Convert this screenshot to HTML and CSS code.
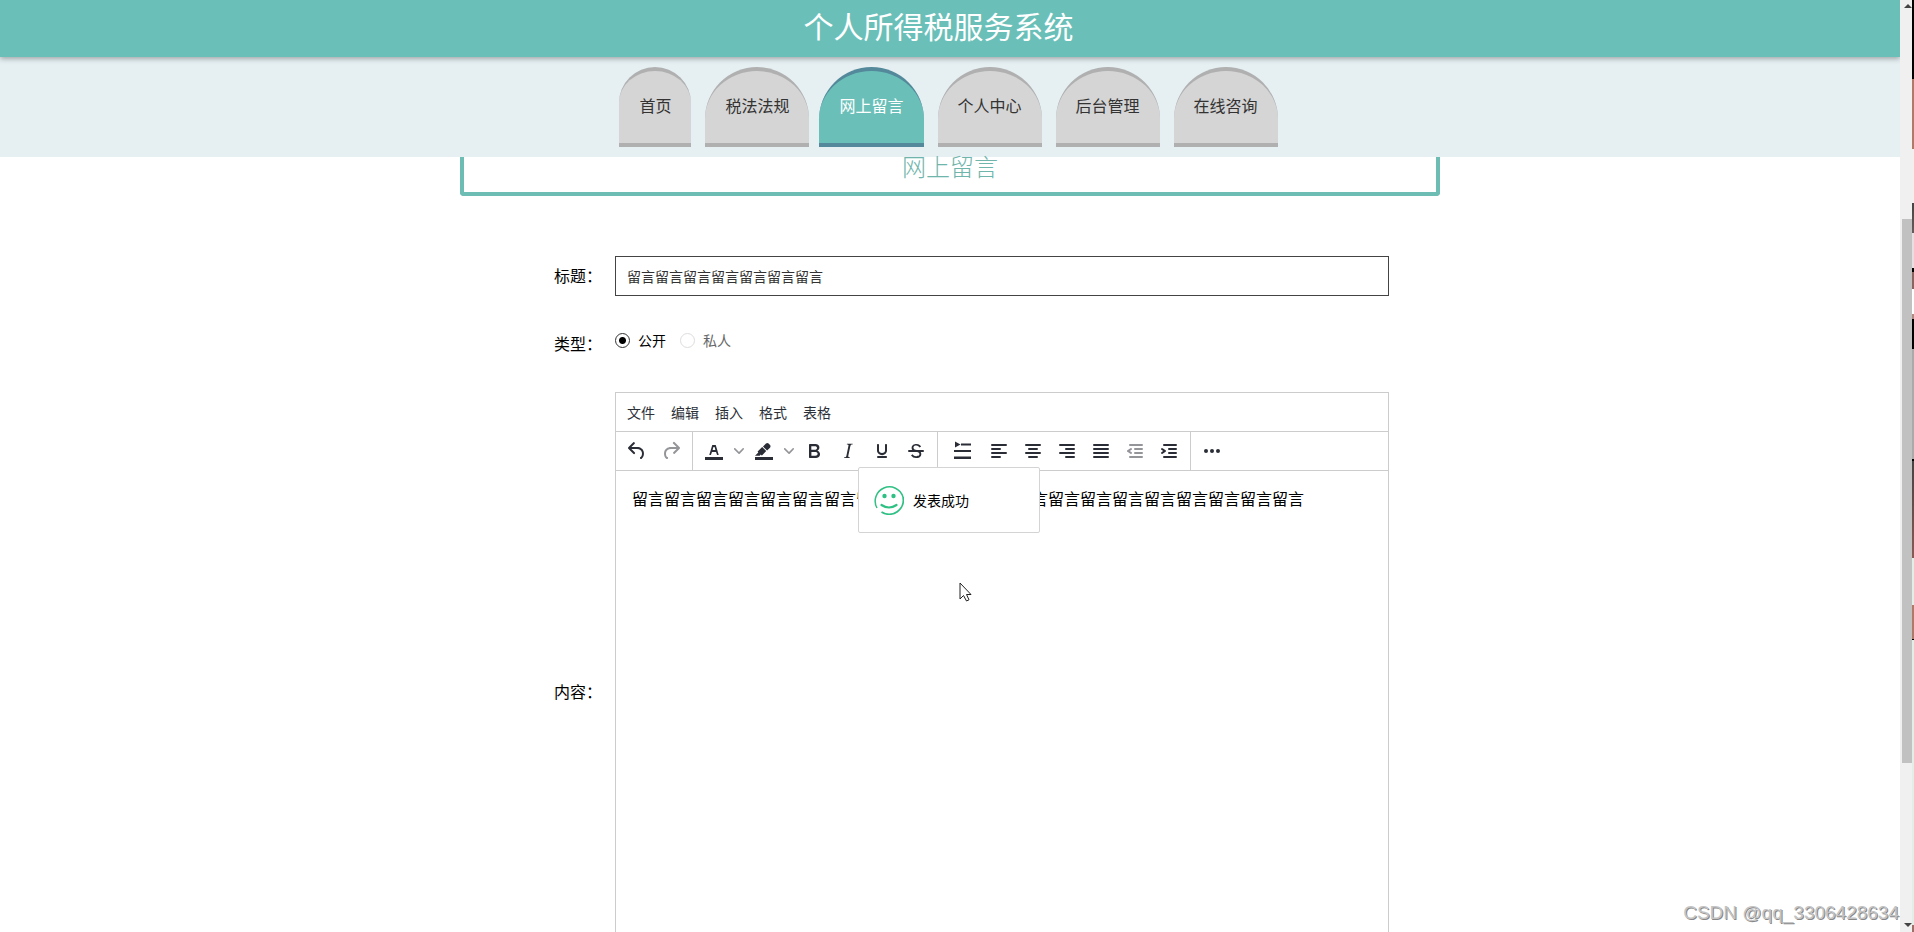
FILE: index.html
```html
<!DOCTYPE html>
<html lang="zh-CN">
<head>
<meta charset="utf-8">
<title>个人所得税服务系统</title>
<link rel="stylesheet" href="styles.css">
</head>
<body>
<div class="page">
  <header class="header"><h1 class="brand">个人所得税服务系统</h1></header>
  <nav class="nav">
    <a class="tab tab-home" href="#">首页</a>
    <a class="tab tab-law" href="#">税法法规</a>
    <a class="tab active" href="#">网上留言</a>
    <a class="tab" href="#">个人中心</a>
    <a class="tab" href="#">后台管理</a>
    <a class="tab" href="#">在线咨询</a>
  </nav>
  <main class="main">
    <h2 class="banner">网上留言</h2>
    <form class="form">
      <label class="label" for="title">标题：</label>
      <input class="input" id="title" type="text" value="留言留言留言留言留言留言留言">
      <span class="label label-type" id="type-label">类型：</span>
      <div class="radios" role="radiogroup" aria-labelledby="type-label">
        <label class="radio"><input type="radio" name="type" checked>公开</label>
        <label class="radio muted"><input type="radio" name="type">私人</label>
      </div>
      <label class="label" for="content">内容：</label>
      <div class="editor">
        <div class="menubar">
          <button type="button" class="menu">文件</button>
          <button type="button" class="menu">编辑</button>
          <button type="button" class="menu">插入</button>
          <button type="button" class="menu">格式</button>
          <button type="button" class="menu">表格</button>
        </div>
        <div class="toolbar">
          <div class="group">
            <button type="button" class="tool" aria-label="撤销"><svg viewBox="0 0 24 24"><path d="M6.4 8H12c3.7 0 6.2 2 6.8 5.1.6 2.7-.4 5.6-2.3 6.8a1 1 0 0 1-1-1.8c1.1-.6 1.8-2.7 1.4-4.6-.5-2.1-2.1-3.5-4.9-3.5H6.4l3.3 3.3a1 1 0 1 1-1.4 1.4l-5-5a1 1 0 0 1 0-1.4l5-5a1 1 0 0 1 1.4 1.4L6.4 8z"/></svg></button>
            <button type="button" class="tool off" aria-label="重做"><svg viewBox="0 0 24 24"><path d="M17.6 10H12c-2.8 0-4.4 1.4-4.9 3.5-.4 2 .3 4 1.4 4.6a1 1 0 1 1-1 1.8c-2-1.2-2.9-4.1-2.3-6.8.6-3 3-5.1 6.8-5.1h5.6l-3.3-3.3a1 1 0 1 1 1.4-1.4l5 5a1 1 0 0 1 0 1.4l-5 5a1 1 0 0 1-1.4-1.4l3.3-3.3z"/></svg></button>
          </div>
          <div class="group">
            <button type="button" class="tool" aria-label="文字颜色"><svg viewBox="0 0 24 24"><path d="M3 18h18v3H3z"/><path d="M8.7 16h-.8a.5.5 0 0 1-.5-.6l2.7-9c.1-.3.3-.4.5-.4h2.8c.2 0 .4.1.5.4l2.7 9a.5.5 0 0 1-.5.6h-.8a.5.5 0 0 1-.4-.4l-.7-2.2c0-.3-.3-.4-.5-.4h-3.4c-.2 0-.4.1-.5.4l-.7 2.2c0 .3-.2.4-.4.4zm2.6-7.6l-.6 2a.5.5 0 0 0 .5.6h1.6a.5.5 0 0 0 .5-.6l-.6-2c0-.3-.3-.4-.5-.4h-.4c-.2 0-.4.1-.5.4z"/></svg></button>
            <button type="button" class="tool chevron" aria-label="选择文字颜色"><svg viewBox="0 0 10 10"><path d="M8.7 2.2c.3-.3.8-.3 1 0 .4.4.4.9 0 1.2L5.7 7.8c-.3.3-.9.3-1.2 0L.2 3.4a.8.8 0 0 1 0-1.2c.3-.3.8-.3 1.1 0L5 6l3.7-3.8z"/></svg></button>
            <button type="button" class="tool" aria-label="背景颜色"><svg viewBox="0 0 24 24"><path d="M3 18h18v3H3z"/><path d="M7.7 16.7H3l3.3-3.3-.7-.8L10.2 8l4 4.1-4 4.2c-.2.2-.6.2-.8 0l-.6-.7-1.1 1.1zm5-7.5L11 7.4l3-2.9a2 2 0 0 1 2.6 0L18 6c.7.7.7 2 0 2.7l-2.9 2.9-1.8-1.8-.6-.6z"/></svg></button>
            <button type="button" class="tool chevron" aria-label="选择背景颜色"><svg viewBox="0 0 10 10"><path d="M8.7 2.2c.3-.3.8-.3 1 0 .4.4.4.9 0 1.2L5.7 7.8c-.3.3-.9.3-1.2 0L.2 3.4a.8.8 0 0 1 0-1.2c.3-.3.8-.3 1.1 0L5 6l3.7-3.8z"/></svg></button>
            <button type="button" class="tool" aria-label="粗体"><svg viewBox="0 0 24 24"><path d="M7.8 19c-.3 0-.5 0-.6-.2l-.2-.5V5.7c0-.2 0-.4.2-.5l.6-.2h5c1.5 0 2.7.3 3.5 1 .7.6 1.1 1.4 1.1 2.5a3 3 0 0 1-.6 1.9c-.4.6-1 1-1.6 1.2.4.1.9.3 1.3.6s.8.7 1 1.2c.4.4.5 1 .5 1.6 0 1.3-.4 2.3-1.3 3-.8.7-2.1 1-3.8 1H7.8zm5-8.3c.6 0 1.2-.1 1.6-.5.4-.3.6-.7.6-1.3 0-1.1-.8-1.7-2.3-1.7H9.3v3.5h3.4zm.5 6c.7 0 1.3-.1 1.7-.4.4-.4.6-.9.6-1.5s-.2-1-.7-1.4c-.4-.3-1-.4-2-.4H9.4v3.8h4z"/></svg></button>
            <button type="button" class="tool" aria-label="斜体"><svg viewBox="0 0 24 24"><path d="M16.7 4.7l-.1.9h-.3c-.6 0-1 0-1.4.3-.3.3-.4.6-.5 1.1l-2.1 9.8v.6c0 .5.4.8 1.4.8h.2l-.2.8H8l.2-.8h.2c1.1 0 1.8-.5 2-1.5l2-9.8.1-.5c0-.6-.4-.8-1.4-.8h-.3l.2-.9h5.8z"/></svg></button>
            <button type="button" class="tool" aria-label="下划线"><svg viewBox="0 0 24 24"><path d="M16 5c.6 0 1 .4 1 1v5.5a4 4 0 0 1-.4 1.8l-1 1.4a5.3 5.3 0 0 1-5.5 1 5 5 0 0 1-1.6-1c-.5-.4-.8-.9-1.1-1.4a4 4 0 0 1-.4-1.8V6c0-.6.4-1 1-1s1 .4 1 1v5.5c0 .3 0 .6.2 1l.6.7a3.3 3.3 0 0 0 2.2.8 3.4 3.4 0 0 0 2.2-.8c.3-.2.4-.5.6-.8l.2-.9V6c0-.6.4-1 1-1zM8 17h8c.6 0 1 .4 1 1s-.4 1-1 1H8a1 1 0 0 1 0-2z"/></svg></button>
            <button type="button" class="tool" aria-label="删除线"><svg viewBox="0 0 24 24"><path d="M15.6 8.5c-.5-.7-1-1.1-1.3-1.3-.6-.4-1.3-.6-2-.6-2.7 0-2.8 1.7-2.8 2.1 0 1.6 1.8 2 3.2 2.3 4.4.9 4.6 2.8 4.6 3.9 0 1.4-.7 4.1-5 4.1A6.2 6.2 0 0 1 7 16.4l1.500-1.100c.4.6 1.600 2 3.700 2 1.600 0 2.500-.4 3-1.200.4-.8.3-2-.8-2.600-.7-.4-1.600-.7-2.900-1-1-.2-3.900-.8-3.900-3.600C7.600 6 10.300 5 12.400 5c2.900 0 4.200 1.600 4.700 2.400l-1.500 1.100z"/><path d="M5 11h14a1 1 0 0 1 0 2H5a1 1 0 0 1 0-2z"/></svg></button>
          </div>
          <div class="group">
            <button type="button" class="tool wide" aria-label="首行缩进"><svg viewBox="0 0 24 24"><path d="M5 2.500l5.500 3L5 8.500zM11 4.500h10v2H11zM4 11h17v2H4zM4 17.500h17v2.500H4z"/></svg></button>
            <button type="button" class="tool" aria-label="左对齐"><svg viewBox="0 0 24 24"><path d="M5 5h14a1 1 0 0 1 0 2H5a1 1 0 1 1 0-2zm0 4h8a1 1 0 0 1 0 2H5a1 1 0 1 1 0-2zm0 8h8a1 1 0 0 1 0 2H5a1 1 0 0 1 0-2zm0-4h14a1 1 0 0 1 0 2H5a1 1 0 0 1 0-2z"/></svg></button>
            <button type="button" class="tool" aria-label="居中"><svg viewBox="0 0 24 24"><path d="M5 5h14a1 1 0 0 1 0 2H5a1 1 0 1 1 0-2zm3 4h8a1 1 0 0 1 0 2H8a1 1 0 1 1 0-2zm0 8h8a1 1 0 0 1 0 2H8a1 1 0 0 1 0-2zm-3-4h14a1 1 0 0 1 0 2H5a1 1 0 0 1 0-2z"/></svg></button>
            <button type="button" class="tool" aria-label="右对齐"><svg viewBox="0 0 24 24"><path d="M5 5h14a1 1 0 0 1 0 2H5a1 1 0 1 1 0-2zm6 4h8a1 1 0 0 1 0 2h-8a1 1 0 0 1 0-2zm0 8h8a1 1 0 0 1 0 2h-8a1 1 0 0 1 0-2zm-6-4h14a1 1 0 0 1 0 2H5a1 1 0 0 1 0-2z"/></svg></button>
            <button type="button" class="tool" aria-label="两端对齐"><svg viewBox="0 0 24 24"><path d="M5 5h14a1 1 0 0 1 0 2H5a1 1 0 1 1 0-2zm0 4h14a1 1 0 0 1 0 2H5a1 1 0 1 1 0-2zm0 4h14a1 1 0 0 1 0 2H5a1 1 0 0 1 0-2zm0 4h14a1 1 0 0 1 0 2H5a1 1 0 0 1 0-2z"/></svg></button>
            <button type="button" class="tool off" aria-label="减少缩进"><svg viewBox="0 0 24 24"><path d="M7 5h12a1 1 0 0 1 0 2H7a1 1 0 1 1 0-2zm5 4h7a1 1 0 0 1 0 2h-7a1 1 0 0 1 0-2zm0 4h7a1 1 0 0 1 0 2h-7a1 1 0 0 1 0-2zm-5 4h12a1 1 0 0 1 0 2H7a1 1 0 0 1 0-2zm1.600-3.800a1 1 0 0 1-1.200 1.600l-3-2a1 1 0 0 1 0-1.600l3-2a1 1 0 0 1 1.200 1.600L6.800 12l1.800 1.200z"/></svg></button>
            <button type="button" class="tool" aria-label="增加缩进"><svg viewBox="0 0 24 24"><path d="M7 5h12a1 1 0 0 1 0 2H7a1 1 0 1 1 0-2zm5 4h7a1 1 0 0 1 0 2h-7a1 1 0 0 1 0-2zm0 4h7a1 1 0 0 1 0 2h-7a1 1 0 0 1 0-2zm-5 4h12a1 1 0 0 1 0 2H7a1 1 0 0 1 0-2zm-2.600-3.800L6.200 12l-1.800-1.200a1 1 0 0 1 1.200-1.600l3 2a1 1 0 0 1 0 1.600l-3 2a1 1 0 1 1-1.200-1.600z"/></svg></button>
          </div>
          <div class="group">
            <button type="button" class="tool" aria-label="更多"><svg viewBox="0 0 24 24"><circle cx="6" cy="12" r="2"/><circle cx="12" cy="12" r="2"/><circle cx="18" cy="12" r="2"/></svg></button>
          </div>
        </div>
        <textarea class="content" id="content">留言留言留言留言留言留言留言留言留言留言留言留言留言留言留言留言留言留言留言留言留言</textarea>
      </div>
    </form>
  </main>
  <div class="toast" role="status">
    <svg class="smile" viewBox="0 0 30 30"><path d="M3 23A14.200 14.200 0 1 1 29 12" fill="none" stroke="#2fc083" stroke-width="1.500"/><path d="M7.500 27A14.200 14.200 0 0 0 29 12" fill="none" stroke="#2fc083" stroke-width="1.800"/><circle cx="10.500" cy="11" r="2.200"/><circle cx="19.500" cy="11" r="2.200"/><path d="M7.500 20q7.500 5 15 0" fill="none" stroke="#2fc083" stroke-width="2.200" stroke-linecap="round"/></svg>
    <span>发表成功</span>
  </div>
  <svg class="cursor" viewBox="0 0 14 20"><path d="M1 1v16l3.500-3.500 3 5.500 2.500-1.200-2.500-5.300H12z" fill="#fff" stroke="#222"/></svg>
  <div class="watermark">CSDN @qq_3306428634</div>
</div>
<div class="scrollbar"><span class="arrow up"></span><span class="thumb"></span><span class="arrow down"></span></div>
<div class="edge"></div>
</body>
</html>
```

FILE: styles.css
```css
* { box-sizing: border-box; }
body {
  margin: 0;
  height: 100vh;
  display: flex;
  overflow: hidden;
  background: #fff;
  color: #000;
  font: 16px/24px "Noto Sans CJK SC", sans-serif;
}
button, input, textarea { font: inherit; color: inherit; }
.page { position: relative; flex: 1; overflow: hidden; }
.header {
  position: relative;
  height: 57px;
  padding-right: 23px;
  background: #6ac0b9;
  box-shadow: 0 2px 5px rgba(0, 0, 0, .3);
}
.brand {
  margin: 0;
  color: #fff;
  font-size: 30px;
  font-weight: 400;
  line-height: 50px;
  text-align: center;
}
.nav {
  display: flex;
  justify-content: center;
  gap: 14px;
  height: 100px;
  padding: 10px 3px 10px 0;
  background: #e6f0f3;
}
.tab {
  height: 80px;
  padding: 0 20px;
  border: solid #b0b0b0;
  border-width: 4px 0;
  border-radius: 60px 60px 0 0;
  background: #d5d5d5;
  color: #333;
  line-height: 68px;
  text-decoration: none;
}
.tab-law { margin-right: -4px; }
.tab.active { background: #6ac0b9; border-color: #53899a; color: #fff; }
.main { width: 980px; max-width: 100%; margin: 0 auto; }
.banner {
  margin: 0 0 60px;
  height: 39px;
  border: 4px solid #6ebdb4;
  border-top: 0;
  border-radius: 0 0 4px 4px;
  color: #6fb5ac;
  font-size: 24px;
  font-weight: 300;
  line-height: 18px;
  text-align: center;
}
.form {
  display: grid;
  grid-template-columns: 61px 1fr;
  align-items: center;
  padding: 0 51px 0 94px;
}
.label { padding-bottom: 2px; line-height: 24px; white-space: nowrap; }
.input {
  width: 100%;
  height: 40px;
  padding: 0 11px;
  border: 1px solid #444;
  background: #fff;
  color: #333;
  font-size: 14px;
}
.radios {
  display: flex;
  gap: 14px;
  align-items: center;
  height: 96px;
  padding-bottom: 8px;
  font-size: 14px;
}
.radio { display: flex; align-items: center; gap: 8px; }
.radio input {
  appearance: none;
  width: 15px;
  height: 15px;
  margin: 0;
  border: 1px solid #ddd;
  border-radius: 50%;
}
.radio input:checked {
  border-color: #333;
  background: radial-gradient(circle, #000 3px, #fff 4px);
}
.muted { color: #666; }
.editor {
  display: flex;
  flex-direction: column;
  height: 600px;
  border: 1px solid #ccc;
}
.menubar {
  display: flex;
  gap: 16px;
  height: 39px;
  padding: 0 11px;
  border-bottom: 1px solid #ccc;
}
.menu, .tool { padding: 0; border: 0; background: none; color: #2b2f38; }
.menu { font-size: 14px; }
.toolbar { display: flex; height: 39px; border-bottom: 1px solid #ccc; }
.group { display: flex; padding: 0 4px; border-right: 1px solid #ccc; }
.group:last-child { border: 0; }
.tool { display: flex; align-items: center; justify-content: center; width: 34px; }
.tool svg { width: 24px; height: 24px; fill: #2b2d36; }
.tool.wide { width: 40px; }
.tool.off svg { opacity: .5; }
.tool.chevron { width: 16px; }
.tool.chevron svg { width: 10px; height: 10px; opacity: .5; }
.content {
  flex: 1;
  padding: 15px 16px;
  border: 0;
  outline: 0;
  resize: none;
  background: none;
}
.toast {
  position: absolute;
  top: 467px;
  left: 50%;
  display: flex;
  align-items: center;
  gap: 9px;
  width: 182px;
  height: 66px;
  margin-left: -92px;
  padding: 0 15px;
  border: 1px solid #d3d4d3;
  border-radius: 2px;
  background: #fff;
  font-size: 14px;
}
.smile { width: 30px; height: 30px; fill: #2fc083; }
.cursor { position: absolute; top: 582px; left: 959px; width: 14px; height: 20px; }
.watermark {
  position: absolute;
  right: 1px;
  bottom: 7px;
  color: #c4c4c4;
  font: 19px/24px "Liberation Sans", sans-serif;
  text-shadow: 1px 1px 0 #888;
}
.scrollbar {
  display: flex;
  flex-direction: column;
  align-items: flex-end;
  width: 12px;
  background: #f0f0f0;
}
.arrow { width: 8px; height: 4px; background: #444; }
.up { margin: 4px 0 211px; clip-path: polygon(50% 0, 100% 100%, 0 100%); }
.down { margin: auto 0 5px; clip-path: polygon(0 0, 100% 0, 50% 100%); }
.thumb { width: 10px; height: 544px; background: #c1c1c1; }
.edge {
  width: 2px;
  background: linear-gradient(#000 79px, #b07a68 79px 149px, #f3efee 149px 203px, #444 203px, #665c5c 233px, #e8dfe2 233px 268px, #000 268px 272px, #8a6560 272px 289px, #fff 289px 314px, #b08a80 314px 319px, #000 319px 349px, #aaa 349px 459px, #000 459px 461px, #444 461px, #8a5a55 558px, #e2efe9 558px 605px, #b07a68 605px 639px, #000 639px 640px, #e2efe9 640px 925px, #a07068 925px);
}
```
